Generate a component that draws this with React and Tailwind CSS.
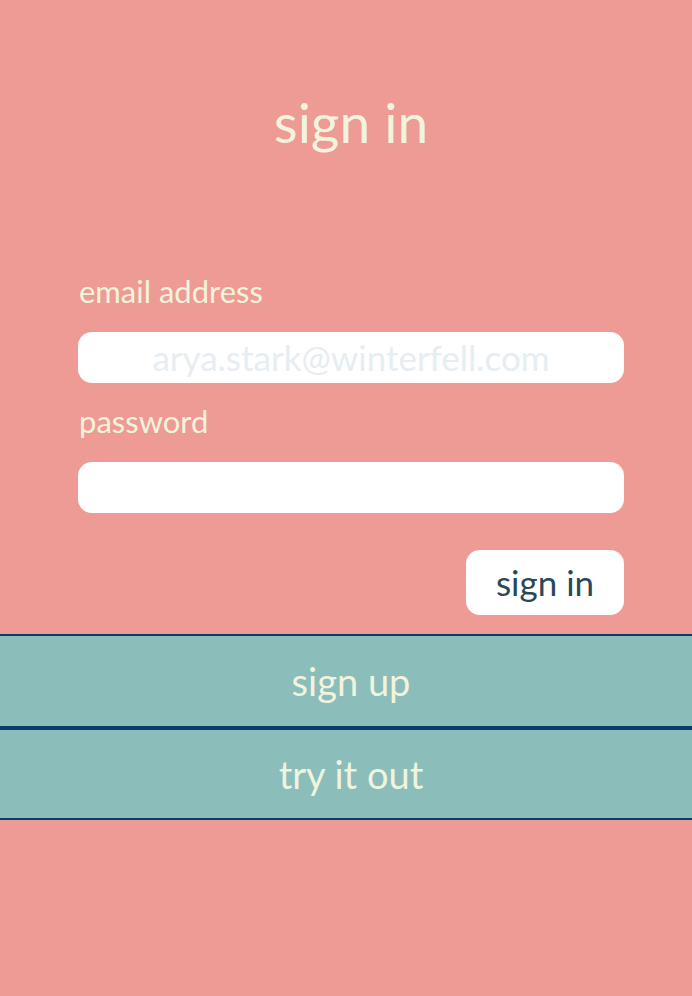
import React from "react";

const App = () => {
  return (
    <div className="h-[996px] w-full bg-[#ef9b95] font-['Lato',sans-serif] overflow-hidden">
      {/* Heading */}
      <h1 className="pt-[87px] pb-[116px] pl-[10px] text-center text-[55px] leading-[70px] text-[#f1f4dc]">
        sign in
      </h1>

      {/* Form */}
      <form className="pl-[78px] pr-[68px] flex flex-col" onSubmit={(e) => e.preventDefault()}>
        <label className="text-[31px] leading-[36px] text-[#f1f4dc] pl-[1px]">email address</label>
        <input
          type="email"
          placeholder="arya.stark@winterfell.com"
          className="mt-[23px] h-[51px] w-full rounded-[14px] bg-white text-center text-[35px] text-[#28495a] outline-none placeholder:text-[#e6edf3]"
        />
        <label className="mt-[20px] text-[31px] leading-[36px] text-[#f1f4dc] pl-[1px]">password</label>
        <input
          type="password"
          className="mt-[23px] h-[51px] w-full rounded-[14px] bg-white text-center text-[35px] text-[#28495a] outline-none"
        />
        <div className="mt-[37px] flex justify-end">
          <button
            type="submit"
            className="h-[65px] w-[158px] rounded-[14px] bg-white text-[35px] text-[#28495a]"
          >
            sign in
          </button>
        </div>
      </form>

      {/* Alternate actions */}
      <div className="mt-[19px] flex flex-col">
        <button className="h-[94px] w-full border-y-2 border-[#0b3b6b] bg-[#8bbdbb] pl-[10px] text-[38px] text-[#f1f4dc]">
          sign up
        </button>
        <button className="h-[92px] w-full border-y-2 border-[#0b3b6b] bg-[#8bbdbb] pl-[10px] text-[38px] text-[#f1f4dc]">
          try it out
        </button>
      </div>
    </div>
  );
};

export default App;
